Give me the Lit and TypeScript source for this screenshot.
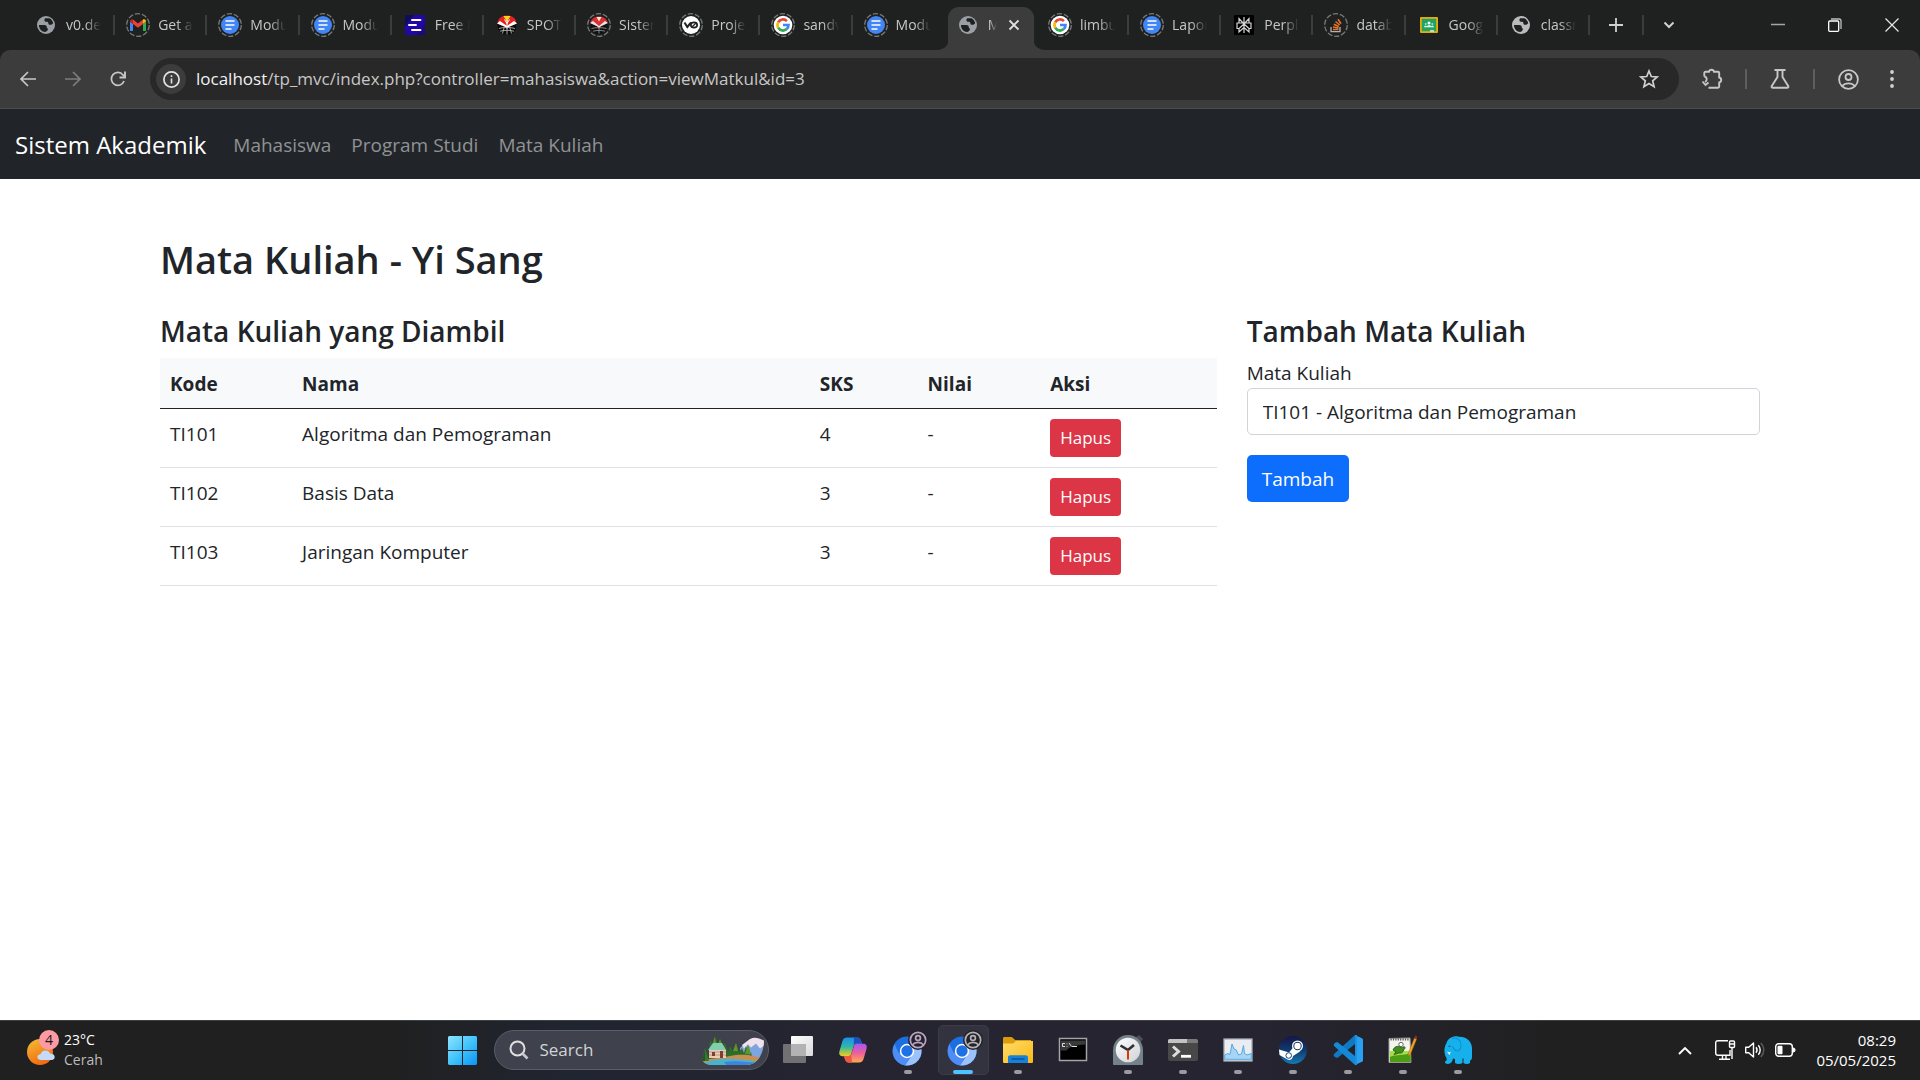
import { LitElement, html, css, svg, nothing } from "lit";
import { customElement } from "lit/decorators.js";
import { classMap } from "lit/directives/class-map.js";

const globe = (fill: string) => svg`
  <circle cx="12" cy="12" r="9" fill=${fill} />
  <path fill="#1f2020" d="M11.2 5.2h4.2c1.9 1 3.2 2.600 3.800 4.800-.6 1.300-1.800 1.800-3.200 1.800-1.200 0-1.600-.8-1.700-1.800-.1-1-.8-1.200-1.800-1.200-1.300 0-2.100-.7-2.100-1.900 0-.8.300-1.300.800-1.700zM4.900 12h5.300c1.600 0 2.600.9 2.600 2.300 0 .9.500 1.200 1.200 1.300-.1 1.800-1 3-2.800 3.400-3.500-.1-6.100-2.900-6.300-7z" />
`;
const ring = svg`<circle cx="12" cy="12" r="11.300" fill="none" stroke="#77797a" stroke-width="1.300" stroke-dasharray="5.300 1.800" />`;

const favicons: Record<string, unknown> = {
  globe: globe("#9aa0a6"),
  globeLight: globe("#b9bbbd"),
  gmail: svg`${ring}
    <path fill="#4285f4" d="M4 18V8.500l3 2.200V18z" /><path fill="#34a853" d="M17 18v-7.300l3-2.200V18z" />
    <path fill="#c5221f" d="M4 8.500C4 6.500 6 5.800 7 6.600v4.200L4 8.700z" /><path fill="#ea4335" d="M7 6.600l5 3.900 5-3.900v4.300l-5 3.800-5-3.800z" />
    <path fill="#fbbc04" d="M17 6.600c1.300-.9 3-.1 3 1.900l-3 2.300z" />`,
  docs: svg`${ring}
    <circle cx="12" cy="12" r="9" fill="#4285f4" />
    <path stroke="#fff" stroke-width="1.700" d="M7.500 8h9M7.500 12h9M7.500 16h6" />`,
  free: svg`<rect x="2" y="2" width="20" height="20" rx="1" fill="#2107a8" /><path d="M2 2h9L2 13z" fill="#0f0d55" /><path d="M22 22h-9l9-11z" fill="#190a80" />
    <path stroke="#fff" stroke-width="1.900" stroke-linecap="round" d="M9 7h8.500M6 12h7M9 17h8.500" />`,
  upi: svg`
    <circle cx="12" cy="12.500" r="9.500" fill="#0b0b0b" />
    <path d="M2.500 10.500C3 5 7 2.500 12 2.500s9 2.500 9.500 8L12 15z" fill="#e32222" />
    <path d="M8.500 3l3.500 6 3.500-6z" fill="#f7d51d" />
    <path d="M2 10.500l3-2.500 7 5 7-5 3 2.500-8.500 3.500L12 16l-1.500-2z" fill="#fff" />
    <path d="M12 7v7M9.500 6.500l2.500 4 2.500-4" stroke="#fff" fill="none" />
    <path d="M4 15.500c4.500-1.500 11.500-1.500 16 0M5 18.200c4-1.200 10-1.200 14 0M12 14v7.500M9 15l-1.500 5.500M15 15l1.500 5.500" stroke="#c8c8c8" stroke-width=".8" fill="none" />`,
  upiRing: svg`${ring}
    <circle cx="12" cy="12.500" r="8.800" fill="#111" />
    <path d="M3.500 10C4 6 7.500 3.500 12 3.500s8 2.500 8.500 6.500L12 14z" fill="#d93030" />
    <path d="M9.500 4l2.500 4.500L14.500 4z" fill="#f5e9d8" />
    <path d="M3 10l3-2 6 5 6-5 3 2-7.500 3.500L12 15.500l-1.500-2z" fill="#e9e2e2" />
    <path d="M4.500 15.500c4.500-1.200 10.500-1.200 15 0M6 18.200c4-1 8-1 12 0M12 14v6.500" stroke="#9d9d9d" stroke-width=".8" fill="none" />`,
  vo: svg`${ring}
    <circle cx="12" cy="12" r="9" fill="#fff" />
    <path d="M5.500 9.500l2.800 4.500 3.700-4.500" stroke="#222" stroke-width="2" fill="none" />
    <ellipse cx="15" cy="12" rx="3.200" ry="2.600" stroke="#222" stroke-width="1.700" fill="none" /><path d="M12.500 14.500l5-5" stroke="#222" stroke-width="1.200" />`,
  google: svg`${ring}
    <circle cx="12" cy="12" r="9.300" fill="#fff" />
    <g fill="none" stroke-width="2.700"><path stroke="#ea4335" d="M7.200 9.300a5.500 5.500 0 0 1 8.700-1.200" /><path stroke="#fbbc05" d="M7.200 14.700a5.500 5.500 0 0 1 0-5.400" /><path stroke="#34a853" d="M15.700 16.100a5.500 5.500 0 0 1-8.500-1.400" /><path stroke="#4285f4" d="M12 12h5.500a5.500 5.500 0 0 1-1.800 4.100" /></g>`,
  perplexity: svg`<rect x="2" y="2" width="20" height="20" rx="1" fill="#000" />
    <path fill="none" stroke="#d6d6d6" stroke-width="1.200" d="M12 4v16M12 11L7 5.500V10h10V5.500L12 11M12 11l-5 4.500V19l5-4.500 5 4.500v-3.500L12 11M7 10H5v5.500h2M17 10h2v5.500h-2" />`,
  stack: svg`${ring}
    <path d="M7 14v4.700h9V14" stroke="#b5b0ab" stroke-width="1.300" fill="none" />
    <path d="M9 16.500h5.500M9 14l5.500 1M9.800 11.200l5 2.200M11.500 8.500l4.200 3.500M14 6.200l3 4.600" stroke="#e2742a" stroke-width="1.600" />`,
  classroom: svg`<rect x="3" y="4" width="18" height="16" rx="1" fill="#e8ab0c" /><rect x="4.800" y="5.800" width="14.400" height="12.400" fill="#1fa463" />
    <circle cx="12" cy="10" r="1.500" fill="#fff" /><circle cx="8.700" cy="11" r="1" fill="#a9dcc0" /><circle cx="15.300" cy="11" r="1" fill="#a9dcc0" /><path d="M7 14.300c.3-1.700 2-1.700 2.600-1 1-1.300 3.800-1.300 4.800 0 .6-.7 2.300-.7 2.600 1z" fill="#e9f6ef" /><rect x="13" y="17.200" width="4" height="1.500" fill="#d7efe2" />`,
};

const tabs = [
  ["globe", "v0.de"],
  ["gmail", "Get a"],
  ["docs", "Modu"],
  ["docs", "Modu"],
  ["free", "Free I"],
  ["upi", "SPOT"],
  ["upiRing", "Sister"],
  ["vo", "Proje"],
  ["google", "sandv"],
  ["docs", "Modu"],
  ["globe", "M"],
  ["google", "limbu"],
  ["docs", "Lapor"],
  ["perplexity", "Perpl"],
  ["stack", "datab"],
  ["classroom", "Goog"],
  ["globeLight", "classr"],
];
const activeTab = 10;

const courses = [
  { kode: "TI101", nama: "Algoritma dan Pemograman", sks: 4 },
  { kode: "TI102", nama: "Basis Data", sks: 3 },
  { kode: "TI103", nama: "Jaringan Komputer", sks: 3 },
];

const chromium = svg`
  <circle cx="14" cy="16" r="14.500" fill="#1b6fe0" />
  <path d="M1.500 9A14.500 14.500 0 0 0 12 30.400l6.500-11-13-2z" fill="#4d8df5" />
  <path d="M12 30.400A14.500 14.500 0 0 0 27.700 11L18 13l1 7z" fill="#9cc2fb" />
  <circle cx="14" cy="16" r="7.200" fill="#fff" /><circle cx="14" cy="16" r="5.700" fill="#1f70e3" />
`;
const badge = (tone: string) => svg`
  <circle cx="25" cy="5" r="10" fill="#26222b" />
  <circle cx="25" cy="5" r="7.700" fill="none" stroke=${tone} stroke-width="1.700" />
  <circle cx="25" cy="3" r="2.400" fill="none" stroke=${tone} stroke-width="1.700" />
  <path d="M19.600 9.700c2.400-3.200 8.400-3.200 10.800 0" fill="none" stroke=${tone} stroke-width="1.700" />
`;

const apps: { name: string; state: string; art: unknown }[] = [
  { name: "Task view", state: "", art: svg`
    <defs><linearGradient id="tv" x1="0" y1="0" x2="1" y2="1"><stop offset="0" stop-color="#fff" /><stop offset="1" stop-color="#d9d9d9" /></linearGradient></defs>
    <rect x="0" y="9" width="23" height="19" rx="1" fill="#717173" /><rect x="8" y="1" width="22" height="20" rx="1" fill="url(#tv)" /><rect x="8" y="9" width="15" height="12" fill="#b3b3b4" />` },
  { name: "Copilot", state: "", art: svg`
    <defs>
      <linearGradient id="cpa" x1="0" y1="0" x2="0" y2="1"><stop offset="0" stop-color="#1a8ff0" /><stop offset=".5" stop-color="#31b8a5" /><stop offset="1" stop-color="#f3cf18" /></linearGradient>
      <linearGradient id="cpb" x1="0" y1="0" x2="0" y2="1"><stop offset="0" stop-color="#a657f2" /><stop offset=".5" stop-color="#ee5f9b" /><stop offset="1" stop-color="#ffab4e" /></linearGradient>
    </defs>
    <path d="M9 2.500h10c2.400 0 3.500 1.400 4.200 3.700l.8 2.600h-5c-2 0-3 1-3.600 3l-2 6.500c-.5 1.900-1.600 2.900-3.600 2.900H4.500C1.700 21.200.7 19 1.500 16L4.300 6.600C5 4 6.500 2.500 9 2.500z" fill="url(#cpa)" />
    <path d="M16 2.500h3c2.400 0 3.500 1.400 4.200 3.700l.8 2.600h-5c-2 0-2.700.5-3.300 1.500z" fill="#1c4fc4" />
    <path d="M21 27.500H11c-2.400 0-3.500-1.400-4.200-3.700L6 21.200h4c2 0 3-1 3.600-2.900l2.400-7.600c.6-1.500 1.600-1.900 3.500-1.900h6c2.800 0 3.800 2.200 3 5.200l-2.800 9.400c-.7 2.600-2.200 4.100-4.700 4.100z" fill="url(#cpb)" />
    <path d="M14 27.500h-3c-2.400 0-3.500-1.400-4.200-3.700L6 21.200h4c1.800 0 2.600-.4 3.300-1.400z" fill="#ef5740" />` },
  { name: "Chromium", state: "open", art: svg`${chromium}${badge("#b9a5c2")}` },
  { name: "Chromium", state: "active", art: svg`${chromium}${badge("#b3b3b3")}` },
  { name: "File Explorer", state: "open", art: svg`
    <defs><linearGradient id="fe" x1="0" y1="0" x2="1" y2="1"><stop offset="0" stop-color="#ffdc6b" /><stop offset="1" stop-color="#f9b916" /></linearGradient></defs>
    <path d="M0 3.500C0 2.500.7 2 1.600 2h7.200l3.400 3H28v6H0z" fill="#dd9a0b" /><path d="M0 8.500h10l3-2.500h17v20.500c0 1-.6 1.500-1.500 1.500h-27C.6 28 0 27.500 0 26.500z" fill="url(#fe)" />
    <path d="M5 28v-5.500c0-1.400.9-2.300 2.300-2.300h15.400c1.400 0 2.300.9 2.300 2.300V28z" fill="#1681d6" /><path d="M8.500 24h13" stroke="#0c4d94" stroke-width="1.300" />` },
  { name: "Command Prompt", state: "", art: svg`
    <rect x="1.500" y="3.500" width="27" height="22" fill="#000" stroke="#a2a4a8" stroke-width="1.500" /><path d="M2.500 5.500h25v4c-8 .5-16 1.500-19 6H2.500z" fill="#38393b" />
    <path d="M7 8.500H4.500v3H7M9 8.500v.8M9 11v.8M11 8l2.500 3.500M14 11.500h5" stroke="#ddd" fill="none" />` },
  { name: "Clock", state: "open", art: svg`
    <defs><linearGradient id="ck" x1="0" y1="0" x2="1" y2="1"><stop offset="0" stop-color="#fff" /><stop offset="1" stop-color="#cfd1d4" /></linearGradient></defs>
    <path d="M22 3l4-3 4 4-3 4z" fill="#4b4e52" /><path d="M0 15A15 15 0 0 1 30 15v14c0 .7-.3 1-1 1H1c-.7 0-1-.3-1-1z" fill="#73828b" />
    <circle cx="15" cy="15" r="12.300" fill="url(#ck)" /><path d="M7.500 10.500L15 15l6-5" stroke="#2c2f33" stroke-width="2.600" fill="none" /><path d="M15 15v9.500" stroke="#d83b01" stroke-width="2" />` },
  { name: "Terminal", state: "open", art: svg`
    <rect x="0" y="4" width="30" height="22" rx="2" fill="#484848" /><path d="M2 4h26c1.200 0 2 .8 2 2v2H0V6c0-1.200.8-2 2-2z" fill="#7a7a7a" /><path d="M2 4h17v4H0V6c0-1.200.8-2 2-2z" fill="#c2c2c2" />
    <path d="M5 11.500l5.500 5-5.500 5" stroke="#ddd" stroke-width="3" fill="none" /><path d="M13 21.300h10" stroke="#fff" stroke-width="2.800" />` },
  { name: "Task Manager", state: "open", art: svg`
    <rect x="1" y="4" width="28" height="22" fill="#e9edf2" stroke="#a7adb4" stroke-width="1.300" />
    <path d="M1.700 20l3-1.500 2.300 1L9 9l2 5 2.300 1 2.200 5 3-1 2-8.500 1 8 2.500 1.500 4.300-1.500v5.800H1.700z" fill="#a8d5f5" stroke="#57a9e2" />` },
  { name: "Steam", state: "open", art: svg`
    <defs><linearGradient id="st" x1="0" y1="0" x2="0" y2="1"><stop offset="0" stop-color="#17154a" /><stop offset=".5" stop-color="#103a6d" /><stop offset="1" stop-color="#1579b4" /></linearGradient></defs>
    <circle cx="15" cy="15" r="14" fill="url(#st)" /><path d="M1 14.500l10 3 5-6 6 5-7 4.500c-.5 4-4 5-6.300 3L1.500 20z" fill="#fff" />
    <circle cx="19.500" cy="11" r="5.500" fill="#fff" /><circle cx="19.500" cy="11" r="4.200" fill="#14325f" /><circle cx="19.500" cy="11" r="3.200" fill="#fff" /><circle cx="10.700" cy="20.500" r="2.800" fill="none" stroke="#14467d" />` },
  { name: "Visual Studio Code", state: "open", art: svg`
    <path d="M22 0l7 3.200c.6.300 1 .9 1 1.600v20.400c0 .7-.4 1.300-1 1.600L22 30z" fill="#29a1f2" /><path d="M22 0L.8 19.200l0 1.700L3 22.700l1.700.1L22 9z" fill="#1079c4" /><path d="M22 30L.8 10.800V9.100L3 7.300l1.700-.1L22 21z" fill="#1689d6" /><path d="M22 0v30l2 0V0z" fill="#1c90dd" />` },
  { name: "Notepad++", state: "open", art: svg`
    <path d="M1 3.500l21-.5 1 24.500H1z" fill="#f4f4ee" stroke="#9b9b92" /><path d="M2 16h20.500l.4 11H2z" fill="#a5dd45" /><path d="M2 22c6-3 13-1 20.500-4l.4 9H2z" fill="#4e9c14" />
    <path d="M2.500 4.500h18" stroke="#555" stroke-width="2" stroke-dasharray="1.200 1.200" /><path d="M5 15c2-5 7-4 9-2 3-3 4 0 2 1.500-1 3-3 4-5 3.500l-5 1.500 2-2.500z" fill="#3f8f1f" stroke="#234e12" stroke-width=".8" /><circle cx="13" cy="9.500" r="2.200" fill="#fff" stroke="#444" stroke-width=".8" />
    <path d="M26.500 3l2 1.200L22.500 19 20.300 21l0-3z" fill="#eda32c" stroke="#b06c12" stroke-width=".5" /><path d="M26.500 3l.8-2.500 2 1.200-.8 2.500z" fill="#9c2c21" />` },
  { name: "Laragon", state: "open", art: svg`
    <path d="M3.500 8C5.500 2.500 11 .5 15.500 1.700 22 1 29 5.500 29 13v9c0 2-.8 3.500-2 3.500V28c-1.800 1.200-4.700 1.200-6.500 0v-4.500h-1V28c-2 1.200-5.500 1.200-7.500 0v-4l-2-.5c-.5 3.200-2.300 5.500-5 5.500-2.500 0-3.300-1.200-3-2.800C3.500 26.500 4 25 3.500 23 1 19 .5 13 3.500 8z" fill="#16b1ec" />
    <path d="M9 3.500c4-1.500 8.500 1 9 6 .3 3.500-1.300 6.500-4 6.500-2.500 0-3-3-5-4.500" fill="none" stroke="#0b93cb" stroke-width="1.100" /><path d="M5.500 11.500c.6-.7 1.500-.7 2 0" stroke="#0b4a68" fill="none" /><path d="M3.800 16.500c1.200 1 2.700 1 4 .2l-1.300 3.300z" fill="#fff" />` },
];

@customElement("app-root")
export class AppRoot extends LitElement {
  static styles = css`
    :host {
      display: flex;
      flex-direction: column;
      min-height: 100vh;
      background: #fff;
      color: #212529;
      font-family: "Open Sans", "Noto Sans", sans-serif;
      font-size: 19px;
      line-height: 30px;
    }
    * { box-sizing: border-box; }
    svg { display: block; flex: none; overflow: visible; }
    button, select, input { font: inherit; color: inherit; margin: 0; }
    a { color: inherit; text-decoration: none; }

    .plain { display: flex; align-items: center; justify-content: center; padding: 0; border: 0; background: none; }

    .strip { display: flex; height: 50px; padding-left: 23px; background: #1f2020; color: #c7c7c7; font-size: 14px; line-height: 20px; }
    .tabs { display: flex; flex: 1; min-width: 0; }
    .tab { position: relative; display: flex; flex: 1 1 0; align-items: center; gap: 8px; min-width: 0; padding: 0 14px 0 11px; border: 0; background: none; text-align: left; }
    .tab::after { content: ""; position: absolute; right: 0; top: 15px; width: 2px; height: 20px; background: #3c3c3c; }
    .tab.active::after, .tab.before::after { display: none; }
    .tab.active { color: #e3e3e3; }
    .shape { position: absolute; left: -8px; right: -8px; top: 7px; bottom: 0; display: flex; }
    .shape-mid { flex: 1; margin: 0 -1px; border-radius: 11px 11px 0 0; background: #3c3c3c; }
    .icon { position: relative; }
    .title { position: relative; flex: 1; min-width: 0; overflow: hidden; white-space: nowrap; mask-image: linear-gradient(90deg, #000 calc(100% - 16px), transparent); }
    .tab.active .title { flex: 0 0 9px; margin-right: 3px; mask-image: linear-gradient(90deg, #000, transparent); }
    .close { position: relative; }
    .controls { display: flex; align-items: center; width: 330px; }
    .new { width: 52px; height: 50px; }
    .rule { width: 2px; height: 20px; background: #3c3c3c; }
    .search-tabs { width: 50px; height: 50px; }
    .window { display: flex; margin-left: auto; }
    .window .plain { width: 57px; height: 50px; }

    .toolbar-back { background: #1f2020; }
    .toolbar { display: flex; align-items: center; height: 59px; padding: 0 9px 0 5px; border-bottom: 1px solid #4b4b4b; border-radius: 10px 10px 0 0; background: #3c3c3c; color: #c7c7c7; }
    .nav-btn { width: 45px; height: 42px; }
    .omnibox { display: flex; flex: 1; align-items: center; gap: 10px; height: 42px; margin: 0 14px 0 10px; padding: 0 20px 0 6px; border-radius: 21px; background: #282828; }
    .info { width: 30px; height: 30px; border-radius: 15px; background: #3c3c3c; }
    .url { flex: 1; font-size: 17px; line-height: 24px; white-space: nowrap; }
    .host { color: #f1f1f1; }
    .tools { display: flex; align-items: center; }
    .tools .plain { width: 38px; height: 40px; }
    .tools .rule { margin: 0 14px; background: #5f5f5f; }
    .tools .profile { margin-right: 6px; }

    .navbar { display: flex; align-items: center; height: 70px; padding: 1px 15px 0; background: #212529; color: #fff; }
    .brand { margin-right: 17px; font-size: 24px; line-height: 38px; }
    .links { display: flex; margin: 0; padding: 0; list-style: none; }
    .links a { display: block; padding: 10px; color: #909294; }

    main { flex: 1; width: 100%; max-width: 1630px; margin: 0 auto; padding: 56px 15px 0; }
    h2 { margin: 0 0 30px; font-size: 38px; line-height: 48px; font-weight: 600; }
    h4 { margin: 0 0 9px; font-size: 28px; line-height: 36px; font-weight: 600; }
    .row { display: flex; margin: 0 -15px; }
    .wide { width: 66.667%; padding: 0 15px; }
    .narrow { width: 33.333%; padding: 0 15px; }
    table { width: 100%; border-collapse: collapse; table-layout: fixed; }
    th { padding: 11px 10px 9px; border-bottom: 1px solid #212529; background: #f8f9fb; text-align: left; font-weight: 700; }
    td { padding: 10px; border-bottom: 1px solid #dee2e6; vertical-align: top; }
    .c-kode { width: 12.5%; } .c-nama { width: 49%; } .c-sks { width: 10.2%; } .c-nilai { width: 11.600%; }
    .delete { display: block; padding: 6px 10px; border: 0; border-radius: 4px; background: #dc3545; color: #fff; font-size: 17px; line-height: 26px; }
    label { display: block; }
    .select { display: block; width: 100%; height: 47px; margin-bottom: 20px; padding: 0 15px; appearance: none; border: 1px solid #ced4da; border-radius: 5px; background: #fff; }
    .add { height: 47px; padding: 0 15px; border: 0; border-radius: 5px; background: #0d6efd; color: #fff; }

    .taskbar { display: grid; grid-template-columns: 1fr auto 1fr; align-items: center; height: 60px; box-shadow: inset 0 1px #3b4042; background: linear-gradient(90deg, #202020 20%, #212531 30%, #262431 45%, #262431 65%, #202020 82%); color: #fff; font-size: 14px; line-height: 20px; }
    .weather { justify-self: start; gap: 5px; margin-left: 27px; text-align: left; }
    .badge { font-size: 14px; fill: #1b1b1b; }
    .sub { display: block; color: #bcbcbc; }
    .dock { display: flex; align-items: center; }
    .slot { position: relative; width: 55px; height: 50px; }
    .slot.active::before { content: ""; position: absolute; left: 2px; right: 2px; top: 0; bottom: 0; border: 1px solid #3c3b48; border-radius: 5px; background: #33323f; }
    .slot svg { position: relative; }
    .slot.open::after, .slot.active::after { content: ""; position: absolute; bottom: 1px; left: 50%; width: 8px; height: 4px; margin-left: -4px; border-radius: 2px; background: #9a9aa1; }
    .slot.active::after { width: 20px; margin-left: -10px; background: #4cc2ff; }
    .search { display: flex; align-items: center; gap: 11px; width: 275px; height: 40px; margin: 0 2px 0 4px; padding: 0 4px 0 14px; border: 1px solid #5a5c66; border-radius: 20px; background: #3f424d; }
    .search input { flex: 1; min-width: 0; padding: 0; border: 0; outline: 0; background: none; font-size: 17px; line-height: 24px; }
    .search input::placeholder { color: #d2d3d6; opacity: 1; }
    .tray { display: flex; justify-self: end; align-items: center; margin-right: 24px; }
    .tray .plain { width: 30px; height: 40px; }
    .tray .more { margin-right: 10px; }
    .clock { margin-left: 16px; font-size: 15px; text-align: right; }
  `;

  private tab([icon, title]: string[], i: number) {
    const active = i === activeTab;
    return html`<button role="tab" aria-selected=${active ? "true" : "false"} class=${classMap({ tab: true, active, before: i === activeTab - 1 })}>
      ${active
        ? html`<span class="shape">
            <svg width="12" height="43" viewBox="0 0 12 43"><path d="M0 43c7 0 12-5 12-12V43z" fill="#3c3c3c" /></svg>
            <span class="shape-mid"></span>
            <svg width="12" height="43" viewBox="0 0 12 43"><path d="M12 43C5 43 0 38 0 31V43z" fill="#3c3c3c" /></svg>
          </span>`
        : nothing}
      <svg class="icon" width="24" height="24" viewBox="0 0 24 24">${favicons[icon]}</svg>
      <span class="title">${title}</span>
      ${active ? html`<svg class="close" width="12" height="12" viewBox="0 0 12 12"><path d="M1.500 1.500l9 9M10.500 1.500l-9 9" stroke="#e3e3e3" stroke-width="1.800" /></svg>` : nothing}
    </button>`;
  }

  private chrome() {
    return html`
      <div class="strip">
        <div class="tabs" role="tablist">${tabs.map((t, i) => this.tab(t, i))}</div>
        <div class="controls">
          <button class="plain new" aria-label="New tab"><svg width="14" height="14" viewBox="0 0 14 14"><path d="M7 0v14M0 7h14" stroke="#d0d0d0" stroke-width="1.800" /></svg></button>
          <span class="rule"></span>
          <button class="plain search-tabs" aria-label="Search tabs"><svg width="12" height="8" viewBox="0 0 12 8"><path d="M1.500 1.500L6 6l4.500-4.500" fill="none" stroke="#d0d0d0" stroke-width="2" /></svg></button>
          <div class="window">
            <button class="plain" aria-label="Minimize"><svg width="14" height="14" viewBox="0 0 14 14"><path d="M0 6.500h14" stroke="#a5a5a5" stroke-width="1.500" /></svg></button>
            <button class="plain" aria-label="Restore"><svg width="14" height="14" viewBox="0 0 14 14"><path d="M3 1h8c1.300 0 2 .7 2 2v8" fill="none" stroke="#bdbdbd" stroke-width="1.300" /><rect x=".7" y="3" width="10" height="10.300" rx="1" fill="none" stroke="#fff" stroke-width="1.300" /></svg></button>
            <button class="plain" aria-label="Close"><svg width="14" height="14" viewBox="0 0 14 14"><path d="M.5.500l13 13M13.500.500l-13 13" stroke="#e8e8e8" stroke-width="1.200" /></svg></button>
          </div>
        </div>
      </div>
      <div class="toolbar-back"><div class="toolbar">
        <button class="plain nav-btn" aria-label="Back"><svg width="16" height="16" viewBox="0 0 16 16"><path d="M16 8H1.500M8 1L1 8l7 7" fill="none" stroke="#c7c7c7" stroke-width="1.700" /></svg></button>
        <button class="plain nav-btn" aria-label="Forward"><svg width="16" height="16" viewBox="0 0 16 16"><path d="M0 8h14.500M8 1l7 7-7 7" fill="none" stroke="#7e7e7e" stroke-width="1.700" /></svg></button>
        <button class="plain nav-btn" aria-label="Reload"><svg width="16" height="16" viewBox="0 0 16 16"><path d="M14 10A6.500 6.500 0 1 1 13 3.900L14.800 6" fill="none" stroke="#c7c7c7" stroke-width="1.700" /><path d="M15 .500v6H9.500" fill="none" stroke="#c7c7c7" stroke-width="1.900" /></svg></button>
        <div class="omnibox">
          <button class="plain info" aria-label="Site information"><svg width="17" height="17" viewBox="0 0 17 17"><circle cx="8.500" cy="8.500" r="7.600" fill="none" stroke="#e3e3e3" stroke-width="1.700" /><path d="M8.500 7.500v5M8.500 4.300v1.800" stroke="#e3e3e3" stroke-width="1.600" /></svg></button>
          <span class="url"><span class="host">localhost</span>/tp_mvc/index.php?controller=mahasiswa&amp;action=viewMatkul&amp;id=3</span>
          <button class="plain" aria-label="Bookmark"><svg width="20" height="20" viewBox="0 0 20 20"><path d="M10 2l2.300 5.500 5.900.5-4.500 3.900 1.400 5.800L10 14.600l-5.100 3.100 1.400-5.800L1.800 8l5.900-.5z" fill="none" stroke="#d0d0d0" stroke-width="1.700" /></svg></button>
        </div>
        <div class="tools">
          <button class="plain" aria-label="Extensions"><svg width="22" height="22" viewBox="0 0 22 22"><path d="M3.300 8.500V5c0-.8.400-1.200 1.200-1.200h3.500c.5-2.800 4.500-2.800 5 0h4c.8 0 1.200.4 1.200 1.200v4.500c2.700.5 2.700 4.500 0 5V18.500c0 .8-.4 1.200-1.200 1.200H7.500M3.300 8.500c3 .5 3.300 4 .7 5.500M1.500 13.500l3 3.500 3-2.500" fill="none" stroke="#c7c7c7" stroke-width="1.900" /></svg></button>
          <span class="rule"></span>
          <button class="plain" aria-label="Labs"><svg width="20" height="22" viewBox="0 0 20 22"><path d="M4.500 2h11M7.500 2v7L1.800 18c-.5 1 0 1.700 1 1.700h14.400c1 0 1.500-.7 1-1.700L12.500 9V2" fill="none" stroke="#c7c7c7" stroke-width="1.900" /></svg></button>
          <span class="rule"></span>
          <button class="plain profile" aria-label="Profile"><svg width="21" height="21" viewBox="0 0 21 21"><circle cx="10.500" cy="10.500" r="9.400" fill="none" stroke="#c7c7c7" stroke-width="1.800" /><circle cx="10.500" cy="8" r="3" fill="none" stroke="#c7c7c7" stroke-width="1.800" /><path d="M4.200 17c3-3.600 9.600-3.600 12.600 0" fill="none" stroke="#c7c7c7" stroke-width="1.800" /></svg></button>
          <button class="plain" aria-label="Menu"><svg width="6" height="20" viewBox="0 0 6 20" fill="#d0d0d0"><circle cx="3" cy="3" r="1.900" /><circle cx="3" cy="10" r="1.900" /><circle cx="3" cy="17" r="1.900" /></svg></button>
        </div>
      </div></div>`;
  }

  private page() {
    return html`
      <nav class="navbar">
        <a class="brand" href="#">Sistem Akademik</a>
        <ul class="links">
          <li><a href="#mahasiswa">Mahasiswa</a></li>
          <li><a href="#prodi">Program Studi</a></li>
          <li><a href="#matkul">Mata Kuliah</a></li>
        </ul>
      </nav>
      <main>
        <h2>Mata Kuliah - Yi Sang</h2>
        <div class="row">
          <section class="wide">
            <h4>Mata Kuliah yang Diambil</h4>
            <table>
              <thead><tr><th class="c-kode">Kode</th><th class="c-nama">Nama</th><th class="c-sks">SKS</th><th class="c-nilai">Nilai</th><th>Aksi</th></tr></thead>
              <tbody>
                ${courses.map((c) => html`<tr><td>${c.kode}</td><td>${c.nama}</td><td>${c.sks}</td><td>-</td><td><button class="delete">Hapus</button></td></tr>`)}
              </tbody>
            </table>
          </section>
          <section class="narrow">
            <h4>Tambah Mata Kuliah</h4>
            <form @submit=${(e: Event) => e.preventDefault()}>
              <label for="matkul">Mata Kuliah</label>
              <select class="select" id="matkul">
                ${courses.map((c) => html`<option>${c.kode} - ${c.nama}</option>`)}
              </select>
              <button class="add" type="submit">Tambah</button>
            </form>
          </section>
        </div>
      </main>`;
  }

  private taskbar() {
    return html`
      <footer class="taskbar">
        <button class="plain weather">
          <svg width="32" height="36" viewBox="0 0 32 36">
            <defs><linearGradient id="sun" x1="0" y1="0" x2=".5" y2="1"><stop offset="0" stop-color="#f3bf35" /><stop offset="1" stop-color="#f26a12" /></linearGradient></defs>
            <circle cx="13" cy="20" r="13" fill="url(#sun)" />
            <path d="M14 28c-4.500 0-5-5.500-.5-5.700 1-5 8.500-5 9.500-.8 6 0 6 6.500 1.500 6.500z" fill="#c3dafa" />
            <circle cx="22" cy="8" r="10" fill="#ff99a4" /><text class="badge" x="22" y="13" text-anchor="middle">4</text>
          </svg>
          <span>23°C<span class="sub">Cerah</span></span>
        </button>
        <div class="dock">
          <button class="plain slot" aria-label="Start">
            <svg width="29" height="29" viewBox="0 0 29 29">
              <defs><linearGradient id="win" gradientUnits="userSpaceOnUse" x1="0" y1="0" x2="29" y2="29"><stop offset="0" stop-color="#8fe3ff" /><stop offset=".5" stop-color="#43c4fb" /><stop offset="1" stop-color="#0a93f5" /></linearGradient></defs>
              <path fill="url(#win)" d="M1 0h13v14H0V1zM15 0h13l1 1v13H15zM0 15h14v14H1l-1-1zM15 15h14v13l-1 1H15z" />
            </svg>
          </button>
          <label class="search">
            <svg width="20" height="20" viewBox="0 0 20 20"><circle cx="8.500" cy="8.500" r="7" fill="#4b4e59" stroke="#e0e0e2" stroke-width="2" /><path d="M13.500 13.500l5 5" stroke="#c8c8cc" stroke-width="2.600" /></svg>
            <input type="text" placeholder="Search" aria-label="Search" />
            <svg width="62" height="30" viewBox="0 0 62 30">
              <defs><clipPath id="pill"><path d="M0 0h62v5c0 13-6 25-18 25H12C5 30 1 28 0 24z" /></clipPath></defs>
              <g clip-path="url(#pill)">
                <path d="M38 24V13l9-8c3-1.500 6-1.500 9-.5l6 3v20H38z" fill="#7fa5e0" /><path d="M40 10l8-6c3-1.500 6-1.500 9-.5l5 2v5l-4 3-4-5-5 4-3-3-4 4z" fill="#f0e2ec" />
                <path d="M7 16l1-11 3 5 2-9 3 8 2-5 3 6 2-2 3 9 2-6 3 6 3-9 3 9 3-4 2 5 2-7 3 9 2-3 2 9H7z" fill="#2f6c2a" /><path d="M12.500 2l2 8h-4zM18 4l2 6h-4zM34 8l2 8h-5zM46 9l3 10h-6z" fill="#5f962c" />
                <path d="M0 26c8-3 18-3 28-5s24-2 34 4v6H0z" fill="#c98f51" /><path d="M1 28c12-4 22-5 32-4s18 1 29 4v4H1z" fill="#45b5cf" /><path d="M22 27c12-2 20 0 40 1v4H26z" fill="#3f83e2" />
                <path d="M6 15l5-7h9l4 7z" fill="#7fcfae" /><path d="M7 15h17v8H7z" fill="#e8cdb8" /><path d="M7 17h17M7 20h17" stroke="#b48570" stroke-width=".8" /><path d="M10 17h3v4h-3zM18 16h3v7h-3z" fill="#7c3f33" />
                <path d="M3 13l4 13H0z" fill="#347a2b" /><path d="M3 14v12H0z" fill="#1f5a25" />
              </g>
            </svg>
          </label>
          ${apps.map((a) => html`<button class=${classMap({ plain: true, slot: true, open: a.state === "open", active: a.state === "active" })} aria-label=${a.name}><svg width="30" height="30" viewBox="0 0 30 30">${a.art}</svg></button>`)}
        </div>
        <div class="tray">
          <button class="plain more" aria-label="Show hidden icons"><svg width="14" height="9" viewBox="0 0 14 9"><path d="M1 8l6-6 6 6" fill="none" stroke="#fff" stroke-width="1.900" /></svg></button>
          <button class="plain" aria-label="Network"><svg width="20" height="20" viewBox="0 0 20 20" fill="none" stroke="#fff" stroke-width="1.400"><path d="M13 .700H3C1.500.700.700 1.500.700 3v10c0 1.500.8 2.300 2.300 2.300h12V10M4 19.300h11M7.500 15.300v4M11 15.300v4" /><rect x="14.500" y="1" width="5" height="6.500" rx="1" /><path d="M14.500 4h5M17 7.500V19" /></svg></button>
          <button class="plain" aria-label="Volume"><svg width="20" height="18" viewBox="0 0 20 18" fill="none" stroke="#fff" stroke-width="1.400"><path d="M.7 6.300h3L8.500 2v14l-4.800-4.300h-3z" stroke-linejoin="round" /><path d="M11 6.300c1.200 1.500 1.200 3.900 0 5.400M13.300 4.200c2.500 2.700 2.500 6.900 0 9.600" /><path d="M15.800 2c4 4 4 10 0 14" stroke="#5c5c5c" /></svg></button>
          <button class="plain" aria-label="Battery"><svg width="20" height="14" viewBox="0 0 20 14"><rect x=".7" y=".7" width="16.600" height="12.600" rx="3" fill="none" stroke="#fff" stroke-width="1.400" /><rect x="2.500" y="2.700" width="5" height="8.600" rx="1" fill="#fff" /><path d="M18 5c1.700 0 2 .8 2 2s-.3 2-2 2z" fill="#fff" stroke="#fff" /></svg></button>
          <div class="clock">08:29<br />05/05/2025</div>
        </div>
      </footer>`;
  }

  render() {
    return html`${this.chrome()}${this.page()}${this.taskbar()}`;
  }
}
